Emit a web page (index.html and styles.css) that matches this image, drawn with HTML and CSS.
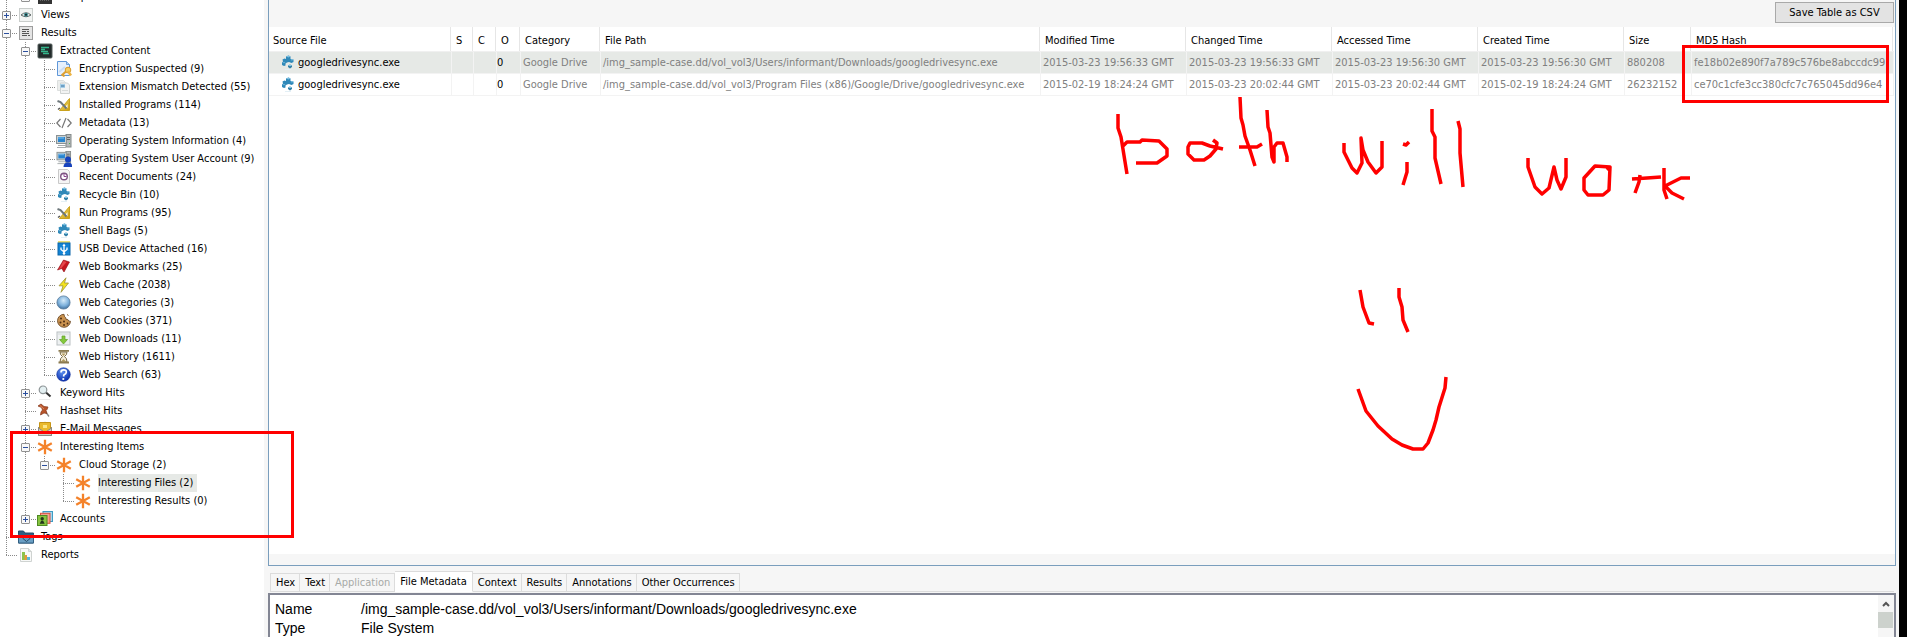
FILE: index.html
```html
<!DOCTYPE html>
<html lang="en">
<head>
<meta charset="utf-8">
<title>Case Viewer</title>
<link rel="stylesheet" href="styles.css">
</head>
<body>
<svg class="defs" width="0" height="0" aria-hidden="true">
  <defs>
    <linearGradient id="gGold" x1="0" y1="0" x2="1" y2="1"><stop offset="0" stop-color="#fbe873"/><stop offset="1" stop-color="#c89a10"/></linearGradient>
    <radialGradient id="gBall" cx=".5" cy=".35" r=".65"><stop offset="0" stop-color="#d6ebf9"/><stop offset=".6" stop-color="#7fb2dc"/><stop offset="1" stop-color="#3f6f9e"/></radialGradient>
    <radialGradient id="gHelp" cx=".4" cy=".3" r=".7"><stop offset="0" stop-color="#5f92f0"/><stop offset="1" stop-color="#0a2fae"/></radialGradient>
    <symbol id="disk" viewBox="0 0 16 16"><rect x="1" y="2" width="14" height="13" fill="#333"/><path d="M3 11h10" stroke="#999" stroke-dasharray="1 1"/></symbol>
    <symbol id="eye" viewBox="0 0 16 16"><rect x="1.500" y="1.500" width="13" height="13" fill="#f2f4f3" stroke="#c9cdcb"/><path d="M3 8Q8 3.500 13 8Q8 11.500 3 8Z" fill="#dfe9e8" stroke="#5d6665"/><circle cx="8" cy="7.700" r="2" fill="#3f8d92"/><circle cx="8" cy="7.700" r="1" fill="#12282b"/></symbol>
    <symbol id="results" viewBox="0 0 16 16"><rect x="1.500" y="1.500" width="13" height="13" fill="#e4e4e4" stroke="#9d9d9d"/><path d="M4 4.500h7M4 6.500h4M4 8.500h7M4 10.500h5M10 10.500h2M9 6.500h2" stroke="#555"/></symbol>
    <symbol id="extract" viewBox="0 0 16 16"><rect x="1" y="1" width="14" height="14" rx="1" fill="#222b2a" stroke="#555e5c"/><path d="M4 4.500h8M4 6.500h4M4 8.500h7M6 10.500h6" stroke="#35b58b" stroke-width="1.400"/></symbol>
    <symbol id="encrypt" viewBox="0 0 16 16"><path d="M1.500.500h9l3 3v11h-12Z" fill="#e6f0fc" stroke="#5f97d8"/><path d="M10.500.500v3h3" fill="#b4d0f2" stroke="#6c9fdb"/><path d="M3 11l6-5" stroke="#c9dcf4" stroke-width="2"/><path d="M5.500 14.500l5-4.500M6.500 13.500l2 2" stroke="#dca033" stroke-width="2"/><circle cx="12" cy="9" r="2.800" fill="#f7ce63" stroke="#d8992a"/><path d="M12 10l3 4.500" stroke="#ecb445" stroke-width="2.500"/></symbol>
    <symbol id="mismatch" viewBox="0 0 16 16"><path d="M1.500 1.500h6l2 2v8h-8Z" fill="#eceeed" stroke="#dcdfde"/><path d="M4.500 4h7l2 2v8.500h-9Z" fill="#f2f3f3" stroke="#cfd3d2"/><rect x="4" y="5" width="5" height="4" fill="#a7cfe8"/><path d="M5 7h3.500" stroke="#356f9f"/><path d="M6 11.500h6" stroke="#d8dbda"/></symbol>
    <symbol id="tools" viewBox="0 0 16 16"><path d="M13.500 1.500v12H3.500Z" fill="url(#gGold)" stroke="#caa21c"/><path d="M11.500 7v4H8.500Z" fill="#fff"/><path d="M1.500 4l3 1 6 6.500" fill="none" stroke="#6d777b" stroke-width="2"/><path d="M2 12.500l2-1.500" stroke="#555" stroke-width="1.500"/></symbol>
    <symbol id="code" viewBox="0 0 16 16"><path d="M4.500 4L.800 8l3.700 4M11.500 4l3.700 4-3.700 4M10 3L6 13" fill="none" stroke="#777" stroke-width="1.200"/></symbol>
    <symbol id="pc" viewBox="0 0 16 16"><rect x="10" y="1.500" width="5" height="12.500" fill="#b5baba" stroke="#858b8b"/><path d="M11 4.500h3M11 6.500h3" stroke="#666"/><rect x="13" y="10" width="1" height="1" fill="#44b54c"/><rect x=".500" y="2.500" width="10" height="8" fill="#c9d0d2" stroke="#899194"/><rect x="2" y="4" width="7" height="5" fill="#2784cf"/><path d="M2 5h6" stroke="#7fc0ef"/><path d="M2 12.500h8M1 14.500h9" stroke="#a5abad"/></symbol>
    <symbol id="user" viewBox="0 0 16 16"><use href="#pc" width="16" height="15" y="-1"/><circle cx="12" cy="8.500" r="3" fill="#1642bd"/><path d="M7.500 16q0-4.500 4.500-4.500t4 4.500Z" fill="#1642bd"/></symbol>
    <symbol id="recent" viewBox="0 0 16 16"><path d="M2.500.500h9l2 2v12h-11Z" fill="#f5f5f5" stroke="#c9c9c9"/><circle cx="8" cy="7.500" r="3.300" fill="#fff" stroke="#7c5381" stroke-width="1.400"/><path d="M8 5V7.500h2.500" fill="none" stroke="#8b3e8f"/></symbol>
    <symbol id="cubes" viewBox="0 0 16 16"><path d="M6 1.500l2.500-1 2 1v2.500l3 .500v2.500l-2 1-2.500-1-2 .500-1.500 1v2L4 11 2 10V7.500L3 6.500 2.500 4.500l2-1L6 4Z" fill="#2f88b8"/><path d="M6 1.500l2.500-1 2 1L8.500 2.500ZM10.500 5l1.500-1 1.500.700-1.500.800Z" fill="#7fc1e2"/><path d="M2 7.700l2-1 1.500.800-1.500.800Z" fill="#6ab3d8"/><path d="M8 10.500l2-1 2 1v1.500L10 13.500 8 12Z" fill="#2d7da6"/><path d="M8 10.500l2-1 2 1-2 .800Z" fill="#8fcbe5"/><path d="M5 14.500h6" stroke="#e3eff5"/></symbol>
    <symbol id="usb" viewBox="0 0 16 16"><path d="M2 1h12" stroke="#e5d24c" stroke-width="1.500"/><rect x="2" y="2" width="12" height="12" fill="#1383d4" stroke="#0c66aa"/><path d="M8 4v9M5 6.500v2l3 2.500 3-2.500v-2" fill="none" stroke="#fff" stroke-width="1.300"/><path d="M8 2.500l1.600 2.500H6.400Z" fill="#fff"/><circle cx="8" cy="12.500" r="1.300" fill="#fff"/></symbol>
    <symbol id="bookmark" viewBox="0 0 16 16"><path d="M7.500 1l6 2-5.500 10-2.200-3.500L1.500 11Z" fill="#c6171f" stroke="#8f0e14" stroke-width=".600"/><path d="M7.500 2l3 1-5 6-2.500 1Z" fill="#e5484d"/></symbol>
    <symbol id="bolt" viewBox="0 0 16 16"><path d="M10 .800L3 8.800h4l-2 6.500L12.500 6H8.500Z" fill="#f3e21e" stroke="#9d9338" stroke-width=".800"/></symbol>
    <symbol id="ball" viewBox="0 0 16 16"><circle cx="7.500" cy="7.500" r="6.600" fill="url(#gBall)" stroke="#5e7f9d" stroke-width=".800"/></symbol>
    <symbol id="cookie" viewBox="0 0 16 16"><path d="M8 1.300a6.500 6.500 0 1 0 6.500 7q-2 .500-2.700-1.800-2.500.500-2.200-2Q8 4 8 1.300Z" fill="#c9924f" stroke="#6d4a25" stroke-width=".900"/><path d="M11 1.500l1.500 1" stroke="#8c5b2b"/><g fill="#4c2c12"><circle cx="5" cy="5.500" r="1"/><circle cx="4.500" cy="9.500" r="1"/><circle cx="8" cy="8.500" r="1"/><circle cx="8" cy="12" r="1"/><circle cx="11.500" cy="10.500" r=".900"/></g></symbol>
    <symbol id="download" viewBox="0 0 16 16"><rect x="1" y="1" width="13" height="13" fill="#eef1f2" stroke="#b9bfc2"/><path d="M1.500 3h12" stroke="#d5dadc"/><path d="M6 5h3v3.500h2.500L7.500 13 3.500 8.500H6Z" fill="#84c93c" stroke="#5f9e28" stroke-width=".700"/></symbol>
    <symbol id="hour" viewBox="0 0 16 16"><path d="M4 3h7q0 3-2.500 4.500Q11 9 11 13H4q0-4 2.500-5.500Q4 6 4 3Z" fill="#f3edda" stroke="#7a6a44"/><path d="M5.500 4.500h4L7.500 7ZM5 12.500l2.500-2.500 2.500 2.500Z" fill="#b29a5c"/><path d="M2.500 1.800h10.500M2.500 13.500h10.500" stroke="#8c7b50" stroke-width="1.800"/></symbol>
    <symbol id="help" viewBox="0 0 16 16"><circle cx="7.500" cy="7.500" r="6.800" fill="url(#gHelp)" stroke="#14329a" stroke-width=".600"/><path d="M5 5.500Q5 2.800 7.700 2.800T10.300 5.300Q10.200 7 8 7.800L7.500 9.500" fill="none" stroke="#fff" stroke-width="1.700"/><circle cx="7.300" cy="12" r="1.100" fill="#fff"/></symbol>
    <symbol id="search" viewBox="0 0 16 16"><path d="M9 7.500l4.500 4" stroke="#333" stroke-width="2"/><circle cx="6" cy="4.800" r="3.800" fill="#e4f0f2" stroke="#8d9496" stroke-width="1.200"/><path d="M2 14.500h11" stroke="#ececec"/></symbol>
    <symbol id="pin" viewBox="0 0 16 16"><path d="M8 8l4 5.500" stroke="#888" stroke-width="1.300"/><path d="M1 3l3-2 3 2.500 4 .500-1 2.500-1 1 1 3-3-.500-3.500 2 .500-3 1.500-2-1-2.500Z" fill="#b9552b" stroke="#84361a" stroke-width=".700"/><path d="M3 2.500l4 3.500" stroke="#dd8a5f"/></symbol>
    <symbol id="mail" viewBox="0 0 16 16"><path d="M1.500 6.500L8 1l6.500 5.500v8h-13Z" fill="#9a9a94" stroke="#787872"/><path d="M2.500 1.500h11v7l-5.500 3-5.500-3Z" fill="#e9b92e" stroke="#c69417"/><path d="M1.500 7L8 11.500 14.500 7v7.500h-13Z" fill="#d0cec5" stroke="#8b8a84"/><path d="M6 4h4v3H6Z" fill="#fbe68c"/></symbol>
    <symbol id="star" viewBox="0 0 16 16"><path d="M8 .800v14.400M1.200 4.200l13.600 7.600M1.200 11.800L14.800 4.200" stroke="#f4822a" stroke-width="2.300"/></symbol>
    <symbol id="accounts" viewBox="0 0 16 16"><rect x="6" y=".500" width="9.500" height="10" fill="#a5d8ee" stroke="#3f9cc4"/><rect x="3.500" y="2.300" width="9.500" height="10" fill="#f6a18f" stroke="#d94f3e"/><rect x=".500" y="4.500" width="9.500" height="10" fill="#86c440" stroke="#4f8a23"/><circle cx="5.200" cy="7.800" r="1.700" fill="#24351d"/><path d="M2.700 12.800h5l-1.500-3h-2Z" fill="#24351d"/></symbol>
    <symbol id="folder" viewBox="0 0 16 16"><path d="M.500 2h5l1.500 2h8.500v10H.500Z" fill="#2f5f83" stroke="#244c6a"/><path d="M.500 5.500h15V14H.500Z" fill="#6a9fc4" stroke="#315f82"/><path d="M6 7.500h4l2 2-3.500 3-3.500-3Z" fill="none" stroke="#274a66"/></symbol>
    <symbol id="report" viewBox="0 0 16 16"><path d="M2.500 1.500h8l3 3v10h-11Z" fill="#f8f9f8" stroke="#cfd3d1"/><path d="M10.500 1.500v3h3" fill="#e2e5e3" stroke="#cfd3d1"/><rect x="4" y="5" width="3" height="8" fill="#8bc34c"/><rect x="6.500" y="8" width="2.500" height="5" fill="#e19a3a"/><rect x="9" y="10" width="3" height="3" fill="#58b6d8"/></symbol>
  </defs>
</svg>

<div class="app">
  <nav class="sidebar" aria-label="Case tree">
    <ul class="tree">
      <li>
        <ul><li><div class="row"><button class="exp" aria-label="Expand"></button><svg class="icon"><use href="#disk"/></svg><span class="label">sample-case.dd</span></div></li></ul>
      </li>
      <li><div class="row"><button class="exp" aria-label="Expand"></button><svg class="icon"><use href="#eye"/></svg><span class="label">Views</span></div></li>
      <li><div class="row"><button class="exp minus" aria-label="Collapse"></button><svg class="icon"><use href="#results"/></svg><span class="label">Results</span></div>
        <ul>
          <li><div class="row"><button class="exp minus" aria-label="Collapse"></button><svg class="icon"><use href="#extract"/></svg><span class="label">Extracted Content</span></div>
            <ul>
              <li><div class="row"><svg class="icon"><use href="#encrypt"/></svg><span class="label">Encryption Suspected (9)</span></div></li>
              <li><div class="row"><svg class="icon"><use href="#mismatch"/></svg><span class="label">Extension Mismatch Detected (55)</span></div></li>
              <li><div class="row"><svg class="icon"><use href="#tools"/></svg><span class="label">Installed Programs (114)</span></div></li>
              <li><div class="row"><svg class="icon"><use href="#code"/></svg><span class="label">Metadata (13)</span></div></li>
              <li><div class="row"><svg class="icon"><use href="#pc"/></svg><span class="label">Operating System Information (4)</span></div></li>
              <li><div class="row"><svg class="icon"><use href="#user"/></svg><span class="label">Operating System User Account (9)</span></div></li>
              <li><div class="row"><svg class="icon"><use href="#recent"/></svg><span class="label">Recent Documents (24)</span></div></li>
              <li><div class="row"><svg class="icon"><use href="#cubes"/></svg><span class="label">Recycle Bin (10)</span></div></li>
              <li><div class="row"><svg class="icon"><use href="#tools"/></svg><span class="label">Run Programs (95)</span></div></li>
              <li><div class="row"><svg class="icon"><use href="#cubes"/></svg><span class="label">Shell Bags (5)</span></div></li>
              <li><div class="row"><svg class="icon"><use href="#usb"/></svg><span class="label">USB Device Attached (16)</span></div></li>
              <li><div class="row"><svg class="icon"><use href="#bookmark"/></svg><span class="label">Web Bookmarks (25)</span></div></li>
              <li><div class="row"><svg class="icon"><use href="#bolt"/></svg><span class="label">Web Cache (2038)</span></div></li>
              <li><div class="row"><svg class="icon"><use href="#ball"/></svg><span class="label">Web Categories (3)</span></div></li>
              <li><div class="row"><svg class="icon"><use href="#cookie"/></svg><span class="label">Web Cookies (371)</span></div></li>
              <li><div class="row"><svg class="icon"><use href="#download"/></svg><span class="label">Web Downloads (11)</span></div></li>
              <li><div class="row"><svg class="icon"><use href="#hour"/></svg><span class="label">Web History (1611)</span></div></li>
              <li><div class="row"><svg class="icon"><use href="#help"/></svg><span class="label">Web Search (63)</span></div></li>
            </ul>
          </li>
          <li><div class="row"><button class="exp" aria-label="Expand"></button><svg class="icon"><use href="#search"/></svg><span class="label">Keyword Hits</span></div></li>
          <li><div class="row"><svg class="icon"><use href="#pin"/></svg><span class="label">Hashset Hits</span></div></li>
          <li><div class="row"><button class="exp" aria-label="Expand"></button><svg class="icon"><use href="#mail"/></svg><span class="label">E-Mail Messages</span></div></li>
          <li><div class="row"><button class="exp minus" aria-label="Collapse"></button><svg class="icon"><use href="#star"/></svg><span class="label">Interesting Items</span></div>
            <ul>
              <li><div class="row"><button class="exp minus" aria-label="Collapse"></button><svg class="icon"><use href="#star"/></svg><span class="label">Cloud Storage (2)</span></div>
                <ul>
                  <li><div class="row"><svg class="icon"><use href="#star"/></svg><span class="label selected">Interesting Files (2)</span></div></li>
                  <li><div class="row"><svg class="icon"><use href="#star"/></svg><span class="label">Interesting Results (0)</span></div></li>
                </ul>
              </li>
            </ul>
          </li>
          <li><div class="row"><button class="exp" aria-label="Expand"></button><svg class="icon"><use href="#accounts"/></svg><span class="label">Accounts</span></div></li>
        </ul>
      </li>
      <li><div class="row"><svg class="icon"><use href="#folder"/></svg><span class="label">Tags</span></div></li>
      <li><div class="row"><svg class="icon"><use href="#report"/></svg><span class="label">Reports</span></div></li>
    </ul>
  </nav>

  <main class="main">
    <section class="listing">
      <div class="toolbar"><button class="save">Save Table as CSV</button></div>
      <div class="table-area">
        <table class="files">
          <colgroup><col class="c-source"><col class="c-s"><col class="c-c"><col class="c-o"><col class="c-cat"><col><col class="c-time"><col class="c-time"><col class="c-time"><col class="c-time"><col class="c-size"><col class="c-hash"></colgroup>
          <thead><tr><th>Source File</th><th>S</th><th>C</th><th>O</th><th>Category</th><th>File Path</th><th>Modified Time</th><th>Changed Time</th><th>Accessed Time</th><th>Created Time</th><th>Size</th><th>MD5 Hash</th></tr></thead>
          <tbody>
            <tr class="current"><td class="source"><svg class="icon"><use href="#cubes"/></svg>googledrivesync.exe</td><td></td><td></td><td class="count">0</td><td>Google Drive</td><td>/img_sample-case.dd/vol_vol3/Users/informant/Downloads/googledrivesync.exe</td><td>2015-03-23 19:56:33 GMT</td><td>2015-03-23 19:56:33 GMT</td><td>2015-03-23 19:56:30 GMT</td><td>2015-03-23 19:56:30 GMT</td><td>880208</td><td>fe18b02e890f7a789c576be8abccdc99</td></tr>
            <tr><td class="source"><svg class="icon"><use href="#cubes"/></svg>googledrivesync.exe</td><td></td><td></td><td class="count">0</td><td>Google Drive</td><td>/img_sample-case.dd/vol_vol3/Program Files (x86)/Google/Drive/googledrivesync.exe</td><td>2015-02-19 18:24:24 GMT</td><td>2015-03-23 20:02:44 GMT</td><td>2015-03-23 20:02:44 GMT</td><td>2015-02-19 18:24:24 GMT</td><td>26232152</td><td>ce70c1cfe3cc380cfc7c765045dd96e4</td></tr>
          </tbody>
        </table>
      </div>
    </section>
    <section class="viewer">
      <div class="tabs" role="tablist">
        <button class="tab" role="tab">Hex</button><button class="tab" role="tab">Text</button><button class="tab" role="tab" disabled>Application</button><button class="tab active" role="tab" aria-selected="true">File Metadata</button><button class="tab" role="tab">Context</button><button class="tab" role="tab">Results</button><button class="tab" role="tab">Annotations</button><button class="tab" role="tab">Other Occurrences</button><span class="tab-rule"></span>
      </div>
      <div class="pane">
        <table class="meta">
          <tbody><tr><th>Name</th><td>/img_sample-case.dd/vol_vol3/Users/informant/Downloads/googledrivesync.exe</td></tr>
          <tr><th>Type</th><td>File System</td></tr></tbody>
        </table>
        <div class="scroll"><svg class="arrow" viewBox="0 0 8 6"><path d="M1 5L4 2l3 3" fill="none" stroke="#555" stroke-width="2"/></svg><span class="thumb"></span></div>
      </div>
    </section>
  </main>
  <div class="edge"></div>

  <div class="mark mark-items"></div>
  <div class="mark mark-hash"></div>
  <svg class="ink" width="620" height="400" viewBox="1100 80 620 400" role="img" aria-label="Handwritten note: both will work">
    <path d="M1118 114V128L1121 137L1127 174M1123 146L1127 142H1140L1142 140L1159 141L1167 149V156L1157 163H1136"/>
    <path d="M1213 140L1217 143L1216 149L1210 156L1204 160H1194L1188 154V147L1190 143H1202L1210 146L1223 149"/>
    <path d="M1240 97L1241 118L1243 125L1245 136L1250 150L1255 166M1239 147H1257L1262 144"/>
    <path d="M1267 110L1268 127L1270 133L1272 157L1274 162V147L1277 143H1283L1287 157V162"/>
    <path d="M1344 143V152L1352 168L1357 173L1362 163L1361 138L1363 150L1368 162L1376 173L1382 167V141"/>
    <path d="M1403 144L1406 145L1409 142M1407 162V172L1403 185"/>
    <path d="M1432 109V131L1435 137V158L1441 184M1458 121L1460 129V153L1463 187"/>
    <path d="M1528 158V167L1535 187L1542 194L1549 188L1554 167L1557 180L1561 189L1566 177V158"/>
    <path d="M1607 170L1610 167L1595 166L1584 178V190L1588 195H1603L1609 190L1610 167"/>
    <path d="M1640 175L1639 182L1635 193M1632 179L1647 178L1661 177"/>
    <path d="M1664 168V190L1667 199M1690 178H1681L1665 186L1672 193L1684 199"/>
    <path d="M1360 290L1363 307L1369 323L1374 324M1399 288V297L1402 307L1403 320L1408 332"/>
    <path d="M1358 389L1362 400L1366 411L1378 426L1392 439L1402 445L1413 449H1423L1428 443L1433 430L1436 420L1439 407L1445 388L1446 377"/>
  </svg>
</div>
</body>
</html>
```
FILE: styles.css
```css
* { box-sizing: border-box; }
body {
  margin: 0;
  font: 11px/18px "DejaVu Sans Condensed", "Noto Sans", sans-serif;
  color: #000;
  background: #fff;
}
button { font: inherit; color: inherit; padding: 0; }
.defs { position: absolute; }
.app { position: relative; display: flex; height: 100vh; overflow: hidden; }
.sidebar { flex: none; width: 264px; overflow: hidden; }
.edge { flex: none; width: 8px; background: #000; }

/* Tree */
.tree { margin: -12px 0 0; }
.tree, .tree ul { list-style: none; padding: 0; }
.tree ul { margin: 0 0 0 19px; }
.tree li {
  background: repeating-linear-gradient(to bottom, #8a8a8a 0 1px, transparent 1px 2px) 6px 0 / 1px 100% no-repeat;
}
.tree li:last-child { background-size: 1px 9px; }
.row {
  display: flex;
  align-items: center;
  height: 18px;
  padding-left: 18px;
  background: repeating-linear-gradient(to right, #8a8a8a 0 1px, transparent 1px 2px) 6px 9px / 11px 1px no-repeat;
}
.exp {
  flex: none;
  width: 9px;
  height: 9px;
  margin: 0 7px 0 -16px;
  border: 1px solid #919191;
  border-radius: 1px;
  background:
    linear-gradient(#2b4f9e, #2b4f9e) center / 5px 1px no-repeat,
    linear-gradient(#2b4f9e, #2b4f9e) center / 1px 5px no-repeat,
    #f8f8f8;
}
.exp.minus { background: linear-gradient(#2b4f9e, #2b4f9e) center / 5px 1px no-repeat, #f8f8f8; }
.icon { flex: none; width: 16px; height: 16px; }
.label { margin-left: 7px; white-space: nowrap; }
.selected { background: #e6e9e6; padding-right: 4px; }

/* Right side */
.main {
  flex: 1;
  min-width: 0;
  display: flex;
  flex-direction: column;
  padding: 0 3px 0 4px;
  background: #f6f6f6;
}
.listing {
  flex: 1;
  display: flex;
  flex-direction: column;
  padding-bottom: 11px;
  border: 1px solid #7a9ebd;
  border-top: 0;
}
.toolbar { display: flex; justify-content: flex-end; height: 27px; padding: 2px 1px 4px; }
.save { width: 119px; border: 1px solid #a9a9a9; background: #e3e3e3; }
.table-area { flex: 1; background: #fff; }

.files { width: 100%; table-layout: fixed; border-collapse: separate; border-spacing: 0; padding-right: 1px; }
.files th, .files td { white-space: nowrap; overflow: hidden; text-align: left; font-weight: normal; }
.files th {
  height: 25px;
  padding: 3px 0 0 4px;
  border-bottom: 1px solid #f0f0f0;
  background: linear-gradient(#e6e6e6, #e6e6e6) right 1px top / 1px 100% no-repeat;
}
.files td {
  height: 22px;
  padding: 0 0 0 2px;
  color: #808080;
  border-right: 1px solid #f3f3f3;
  border-bottom: 1px solid #f3f3f3;
}
.files .current td { background: #e6e9e6; }
.files .source { padding-left: 11px; color: #000; }
.files .source .icon { margin-right: 2px; vertical-align: middle; }
.files .count { padding-left: 0; color: #000; }
.c-source { width: 183px; }
.c-s { width: 22px; }
.c-c { width: 23px; }
.c-o { width: 24px; }
.c-cat { width: 80px; }
.c-time { width: 146px; }
.c-size { width: 67px; }
.c-hash { width: 202px; }

/* Content viewer */
.viewer { flex: none; padding-top: 5px; }
.tabs { display: flex; align-items: flex-end; padding: 0 2px; }
.tab {
  height: 19px;
  padding: 0 4px 0 5px;
  border: 1px solid #dcdcdc;
  border-left: 0;
  background: #f6f6f6;
  line-height: 18px;
}
.tab:first-child { border-left: 1px solid #dcdcdc; }
.tab:disabled { color: #a7aaa7; }
.tab.active { height: 21px; padding: 0 5px; border-bottom-color: #fff; background: #fff; }
.tab-rule { flex: 1; height: 1px; background: #dcdcdc; }
.pane {
  display: flex;
  height: 44px;
  margin-top: 1px;
  border: 2px solid #838694;
  border-bottom: 0;
  background: #fff;
}
.meta { border-spacing: 0; margin: 5px auto 0 5px; font: 14px/19px "Liberation Sans", Arial, sans-serif; }
.meta th { width: 86px; padding: 0; text-align: left; font-weight: normal; }
.meta td { padding: 0; }
.scroll { display: flex; flex-direction: column; align-items: center; width: 16px; padding: 6px 1px 0 0; background: #f6f6f6; }
.arrow { width: 8px; height: 6px; }
.thumb { width: 15px; height: 16px; margin-top: 5px; background: #cdd2cd; }

/* Red annotations drawn over the window */
.mark { position: absolute; border: 3px solid #f00; }
.mark-items { left: 10px; top: 431px; width: 284px; height: 107px; }
.mark-hash { right: 18px; top: 45px; width: 207px; height: 58px; }
.ink {
  position: absolute;
  left: 1100px;
  top: 80px;
  fill: none;
  stroke: #f00;
  stroke-width: 3.5;
  stroke-linejoin: round;
  pointer-events: none;
}
```
